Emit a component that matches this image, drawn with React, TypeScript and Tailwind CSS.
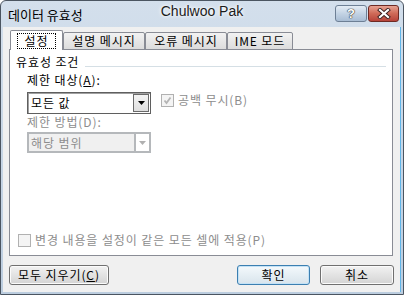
import React from 'react';

const font = { fontFamily: '"Noto Sans CJK KR", "Liberation Sans", sans-serif' };

const Tab: React.FC<{ label: string; w: string; selected?: boolean }> = ({ label, w, selected }) => {
  if (selected) {
    return (
      <div className={`${w} h-[20px] bg-white border border-b-0 border-[#898c95] rounded-t-[2px] flex items-center justify-center relative z-10`}>
        <span className="border border-dotted border-black px-[7px] h-[16px] leading-[14px] text-[12px] text-black">{label}</span>
      </div>
    );
  }
  return (
    <div className={`${w} h-[18px] border border-[#898c95] rounded-t-[2px] bg-gradient-to-b from-[#f2f2f2] to-[#dcdcdc] flex items-center justify-center text-[12px] text-black leading-none`}>
      {label}
    </div>
  );
};

const Button: React.FC<{ children: React.ReactNode; w: string; primary?: boolean }> = ({ children, w, primary }) => (
  <button
    className={`${w} h-[20px] rounded-[3px] border text-[12px] leading-none text-black flex items-center justify-center ${
      primary
        ? 'border-[#3c7fb1] bg-gradient-to-b from-[#f4f9fc] to-[#d8e4ec] shadow-[inset_0_0_0_1px_#c3e2f6]'
        : 'border-[#707070] bg-gradient-to-b from-[#f2f2f2] to-[#d4d4d4] shadow-[inset_0_0_0_1px_#fbfbfb]'
    }`}
  >
    {children}
  </button>
);

const DisabledCheck: React.FC<{ checked?: boolean }> = ({ checked }) => (
  <div className="w-[13px] h-[13px] border border-[#b1b1b1] bg-[#f4f4f4] flex items-center justify-center shrink-0">
    {checked && (
      <svg width="9" height="9" viewBox="0 0 9 9">
        <path d="M1.5 4.5 L3.5 7 L7.5 1.5" stroke="#b4b4b4" strokeWidth="1.8" fill="none" />
      </svg>
    )}
  </div>
);

export default function App() {
  return (
    <div className="w-[404px] h-[295px] flex flex-col border border-[#4b5561] rounded-t-[6px] overflow-hidden bg-gradient-to-b from-[#d3dfec] to-[#bccddf] select-none" style={font}>
      {/* title bar */}
      <div className="h-[26px] flex items-start relative shrink-0">
        <span className="ml-[7px] mt-[6px] text-[13px] leading-[16px] text-black">데이터 유효성</span>
        <span
          className="absolute left-0 right-0 top-[2px] text-center text-[14px] leading-[16px] text-[#1b1b1b] [text-shadow:0_0_5px_#ffffff,0_0_3px_#ffffff]"
          style={{ fontFamily: '"Liberation Sans", Arial, sans-serif' }}
        >
          Chulwoo Pak
        </span>
        <div className="ml-auto mt-[4px] mr-[4px] flex gap-[1px]">
          <div className="w-[32px] h-[17px] rounded-[3px] border border-[#6d7f95] bg-gradient-to-b from-[#e4ecf5] via-[#c3d3e4] to-[#a9bdd4] flex items-center justify-center">
            <span className="text-[13px] font-bold leading-none text-white [text-shadow:0_0_1px_#333,0_0_1px_#333,0_0_1px_#333]" style={{ fontFamily: '"Liberation Sans", sans-serif' }}>?</span>
          </div>
          <div className="w-[31px] h-[17px] rounded-[3px] border border-[#6e2a24] bg-gradient-to-b from-[#e6a192] via-[#cf6a58] to-[#b7433a] flex items-center justify-center">
            <svg width="14" height="11" viewBox="0 0 14 11">
              <path d="M3 2 L11 9 M11 2 L3 9" stroke="#3a2020" strokeWidth="4" strokeLinecap="square" />
              <path d="M3 2 L11 9 M11 2 L3 9" stroke="#ffffff" strokeWidth="2.2" strokeLinecap="square" />
            </svg>
          </div>
        </div>
      </div>

      {/* body */}
      <div className="flex-1 mx-[2px] mb-[2px] bg-[#f0f0f0] border-r border-[#5fb4e8] flex flex-col tracking-[0.9px]">
        <div className="ml-[7px] mt-[3px] h-[20px] flex items-end -mb-px relative z-10">
          <Tab label="설정" w="w-[53px]" selected />
          <Tab label="설명 메시지" w="w-[82px]" />
          <Tab label="오류 메시지" w="w-[82px]" />
          <Tab label="IME 모드" w="w-[66px]" />
        </div>

        <div className="ml-[6px] w-[384px] h-[207px] bg-white border border-[#898c95] flex flex-col text-[12px]">
          <div className="mt-[4px] h-[16px] flex items-start pl-[6px] pr-[6px]">
            <span className="leading-[16px] text-black">유효성 조건</span>
            <div className="flex-1 h-px bg-[#d5dfe5] mt-[12px] ml-[6px]" />
          </div>
          <div className="mt-[2px] pl-[17px] leading-[16px] text-black">
            제한 대상(<span className="underline">A</span>):
          </div>
          <div className="mt-[4px] pl-[17px] flex items-start">
            <div className="w-[124px] h-[22px] border border-[#5f5f5f] bg-white flex items-center shadow-[inset_1px_1px_0_#a0a0a0]">
              <span className="flex-1 pl-[3px] leading-none text-black">모든 값</span>
              <div className="w-[16px] h-[18px] mr-[1px] border border-[#6a6a6a] bg-gradient-to-b from-[#f4f4f4] to-[#dedede] flex items-center justify-center">
                <svg width="7" height="4" viewBox="0 0 7 4"><path d="M0 0 H7 L3.5 4 Z" fill="#000" /></svg>
              </div>
            </div>
            <div className="ml-[10px] mt-[1px] flex items-center gap-[4px]">
              <DisabledCheck checked />
              <span className="leading-[14px] text-[#8d8d8d]">공백 무시(B)</span>
            </div>
          </div>
          <div className="pl-[17px] leading-[15px] text-[#8d8d8d]">제한 방법(D):</div>
          <div className="mt-[3px] pl-[17px]">
            <div className="w-[124px] h-[21px] border-2 border-[#b5b8bb] bg-[#f0f0f0] flex items-center">
              <span className="flex-1 pl-[2px] leading-none text-[#8d8d8d]">해당 범위</span>
              <div className="w-[15px] h-[17px] border-l-2 border-[#b5b8bb] bg-white flex items-center justify-center">
                <svg width="7" height="4" viewBox="0 0 7 4"><path d="M0 0 H7 L3.5 4 Z" fill="#b0b0b0" /></svg>
              </div>
            </div>
          </div>
          <div className="flex-1" />
          <div className="mb-[8px] pl-[8px] flex items-center gap-[4px]">
            <DisabledCheck />
            <span className="leading-[14px] text-[#8d8d8d]">변경 내용을 설정이 같은 모든 셀에 적용(P)</span>
          </div>
        </div>

        <div className="mt-[9px] ml-[6px] mr-[6px] flex">
          <Button w="w-[100px]">
            모두 지우기(<span className="underline">C</span>)
          </Button>
          <div className="flex-1" />
          <Button w="w-[73px]" primary>확인</Button>
          <div className="w-[10px]" />
          <Button w="w-[74px]">취소</Button>
        </div>
      </div>
    </div>
  );
}
